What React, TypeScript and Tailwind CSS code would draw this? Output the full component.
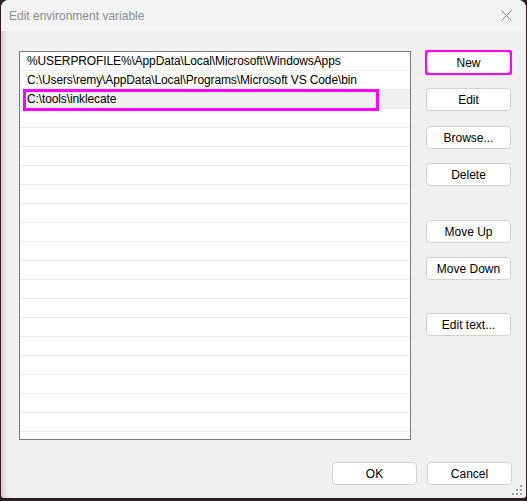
import React from "react";

const paths = [
  "%USERPROFILE%\\AppData\\Local\\Microsoft\\WindowsApps",
  "C:\\Users\\remy\\AppData\\Local\\Programs\\Microsoft VS Code\\bin",
  "C:\\tools\\inklecate",
];

const ROW_COUNT = 21;

function DialogButton({
  label,
  className = "",
  highlight = false,
}: {
  label: string;
  className?: string;
  highlight?: boolean;
}) {
  return (
    <div
      className={`relative flex h-[23px] w-[85px] items-center justify-center rounded-[4px] border bg-white text-[12px] text-black ${
        highlight ? "border-[#ff00ff]" : "border-[#d1d1d1]"
      } ${className}`}
    >
      {highlight && (
        <span className="pointer-events-none absolute -inset-[2px] rounded-[2px] border-[2px] border-[#ff00ff]" />
      )}
      {label}
    </div>
  );
}

function SizeGrip() {
  const dots = [
    [8, 0],
    [4, 4],
    [8, 4],
    [0, 8],
    [4, 8],
    [8, 8],
  ];
  return (
    <svg width="10" height="10" viewBox="0 0 10 10" className="absolute bottom-[3px] right-[4px]">
      {dots.map(([x, y]) => (
        <rect key={`${x}-${y}`} x={x} y={y} width="2" height="2" fill="#a0a0a0" />
      ))}
    </svg>
  );
}

export default function App() {
  return (
    <div
      className="h-[501px] w-[527px] overflow-hidden bg-[#2b1f22]"
      style={{ fontFamily: '"Liberation Sans", Arial, sans-serif' }}
    >
      <div className="relative ml-[1px] flex h-[498px] w-[525px] flex-col overflow-hidden rounded-t-[8px] rounded-b-[3px] bg-[#f0f0f0] shadow-[inset_7px_0_6px_-5px_rgba(0,0,0,0.18)]">
        {/* title bar */}
        <div className="flex h-[31px] items-center justify-between bg-[#f3f3f3] pl-[8px] pr-[14px]">
          <span className="text-[12px] text-[#8c8c8c]">Edit environment variable</span>
          <svg width="11" height="11" viewBox="0 0 11 11">
            <path d="M0.5 0.5 L10.5 10.5 M10.5 0.5 L0.5 10.5" stroke="#8a8a8a" strokeWidth="1" />
          </svg>
        </div>

        {/* list + side buttons */}
        <div className="flex pl-[18px] pt-[20px]">
          <div className="relative h-[389px] w-[392px] overflow-hidden border border-[#7a7a7a] bg-white">
            {Array.from({ length: ROW_COUNT }).map((_, i) => (
              <div
                key={i}
                className={`flex h-[19px] items-center border-b border-[#ececec] pl-[7px] text-[12px] tracking-[-0.12px] text-black ${
                  i === 2 ? "bg-[#f0f0f0]" : ""
                }`}
              >
                {paths[i] ?? ""}
              </div>
            ))}
            <span className="pointer-events-none absolute left-[3px] top-[37px] h-[22px] w-[356px] border-[3px] border-[#ff00ff]" />
          </div>

          <div className="ml-[15px] flex flex-col">
            <DialogButton label="New" highlight />
            <DialogButton label="Edit" className="mt-[14px]" />
            <DialogButton label="Browse..." className="mt-[15px]" />
            <DialogButton label="Delete" className="mt-[14px]" />
            <DialogButton label="Move Up" className="mt-[34px]" />
            <DialogButton label="Move Down" className="mt-[14px]" />
            <DialogButton label="Edit text..." className="mt-[33px]" />
          </div>
        </div>

        {/* OK / Cancel */}
        <div className="mt-[22px] flex justify-end gap-[10px] pr-[14px]">
          <DialogButton label="OK" />
          <DialogButton label="Cancel" />
        </div>

        <SizeGrip />
      </div>
    </div>
  );
}
